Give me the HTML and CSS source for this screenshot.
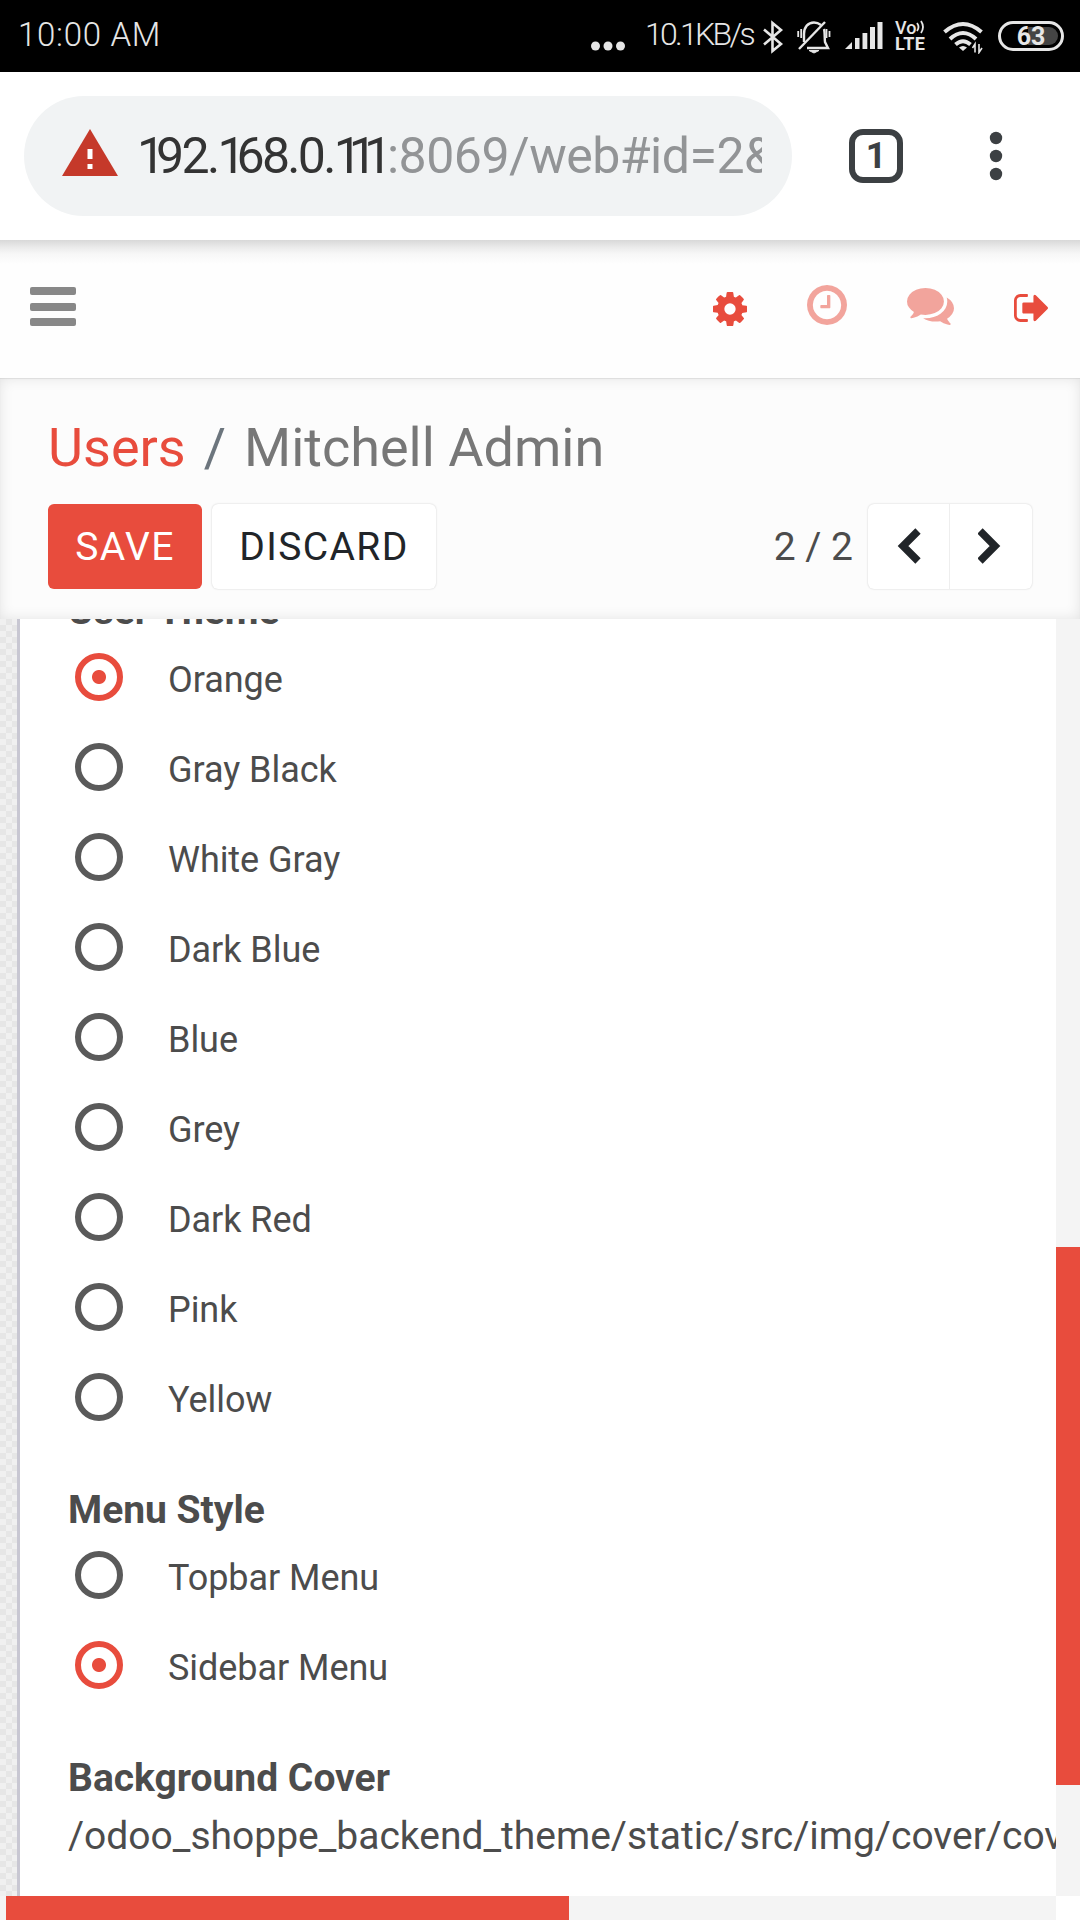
FILE: index.html
```html
<!DOCTYPE html>
<html lang="en">
<head>
<meta charset="utf-8">
<title>Mitchell Admin</title>
<link rel="stylesheet" href="styles.css">
</head>
<body>
<div class="status">
  <span class="time">10:00 AM</span>
  <svg class="more" width="34" height="10" viewBox="0 0 34 10" fill="#e6e6e6"><circle cx="4.500" cy="5" r="4.500"/><circle cx="17" cy="5" r="4.500"/><circle cx="29.500" cy="5" r="4.500"/></svg>
  <span class="speed">10.1KB/s</span>
  <svg class="bt" width="22" height="34" viewBox="0 0 22 34" fill="none" stroke="#e6e6e6" stroke-width="2.600"><path d="M2 9.500L19 24L10.500 31V3L19 10L2 24.500"/></svg>
  <svg class="bell" width="34" height="34" viewBox="0 0 34 34" fill="none" stroke="#e6e6e6" stroke-width="2.400"><path d="M7 22V14C7 7 11 2.500 17 2.500C20 2.500 22 3.500 24 5M27 9C28 12 27.500 19 28 22L31 28H10"/><path d="M2 29L28 2"/><path d="M12 30.500H22L17 33Z" fill="#e6e6e6" stroke-width="1"/><path d="M1.200 11v6M4.200 9v9M29.500 9v9M32.500 11v6" stroke-width="1.800"/></svg>
  <svg class="signal" width="39" height="29" viewBox="0 0 39 29" fill="#e6e6e6"><path d="M1 28L8 21V28Z"/><rect x="11" y="17" width="4.500" height="11"/><rect x="18.500" y="12" width="4.800" height="16"/><rect x="26" y="6" width="5" height="22"/><rect x="33.500" y="1" width="5" height="27"/></svg>
  <span class="volte"><span class="vo">Vo<svg width="9" height="14" viewBox="0 0 9 14" fill="none" stroke="#e6e6e6" stroke-width="1.800"><path d="M1 3Q4 7 1 11M5 1Q9 7 5 13"/></svg></span><span class="lte">LTE</span></span>
  <svg class="wifi" width="41" height="33" viewBox="0 0 41 33" fill="none" stroke="#e6e6e6" stroke-width="4"><path d="M1.500 11Q20 -5 38.500 11M7 18Q20 6 33 18M12.500 23.500Q20 17 27.500 23.500"/><path d="M16 26.500Q20 23.500 24 26.500L20 30Z" fill="#e6e6e6" stroke="none"/><path d="M32 31.500V23L29.500 27M36 23V31.500L39 27" stroke-width="1.600"/></svg>
  <span class="battery"><span class="level">63</span></span>
</div>

<div class="browser">
  <div class="pill">
    <svg width="56" height="48" viewBox="0 0 56 48"><path d="M28 0L56 47H0Z" fill="#c5392a"/><path d="M25.500 20h5v10h-5zM25.500 35h5v5h-5z" fill="#fff"/></svg>
    <div class="url"><span class="host"><span class="one">1</span>92.<span class="one">1</span>68.0.<span class="ones">111</span></span><span class="path">:8069/web#id=2&amp;</span></div>
  </div>
  <div class="tabs">1</div>
  <svg class="menu" width="14" height="50" viewBox="0 0 14 50" fill="#3c4043"><circle cx="7" cy="7" r="6.200"/><circle cx="7" cy="25" r="6.200"/><circle cx="7" cy="43" r="6.200"/></svg>
</div>

<header class="topbar">
  <div class="burger"><i></i><i></i><i></i></div>
  <svg class="cog" viewBox="128 128 1536 1536"><path d="M1152 896q0-106-75-181t-181-75-181 75-75 181 75 181 181 75 181-75 75-181zm512-109v222q0 12-8 23t-20 13l-185 28q-19 54-39 91 35 50 107 138 10 12 10 25t-9 23q-27 37-99 108t-94 71q-12 0-26-9l-138-108q-44 23-91 38-16 136-29 186-7 28-36 28h-222q-14 0-24.500-8.500t-11.500-21.500l-28-184q-49-16-90-37l-141 107q-10 9-25 9-14 0-25-11-126-114-165-168-7-10-7-23 0-12 8-23 15-21 51-66.500t54-70.500q-27-50-41-99l-183-27q-13-2-21-12.500t-8-23.500v-222q0-12 8-23t19-13l186-28q14-46 39-92-40-57-107-138-10-12-10-24 0-10 9-23 26-36 98.500-107.500t94.500-71.500q13 0 26 10l138 107q44-23 91-38 16-136 29-186 7-28 36-28h222q14 0 24.500 8.500t11.500 21.500l28 184q49 16 90 37l142-107q9-9 24-9 13 0 25 10 129 119 165 170 7 8 7 22 0 12-8 23-15 21-51 66.500t-54 70.500q26 50 41 98l183 28q13 2 21 12.500t8 23.500z"/></svg>
  <svg class="clock" viewBox="128 128 1536 1536"><path d="M1024 544v448q0 14-9 23t-23 9h-320q-14 0-23-9t-9-23v-64q0-14 9-23t23-9h224v-352q0-14 9-23t23-9h64q14 0 23 9t9 23zm416 352q0-148-73-273t-198-198-273-73-273 73-198 198-73 273 73 273 198 198 273 73 273-73 198-198 73-273zm224 0q0 209-103 385.500t-279.500 279.500-385.500 103-385.500-103-279.500-279.500-103-385.500 103-385.500 279.500-279.500 385.500-103 385.500 103 279.500 279.500 103 385.500z"/></svg>
  <svg class="chat" viewBox="0 256 1792 1408"><path d="M1408 768q0 139-94 257t-256.500 186.500-353.500 68.500q-86 0-176-16-124 88-278 128-36 9-86 16h-3q-11 0-20.500-8t-11.500-21q-1-3-1-6.500t.5-6.500 2-6l2.500-5 3.500-5.500 4-5 4.500-5 4-4.500q5-6 23-25t26-29.500 22.500-29 25-38.500 20.500-44q-124-72-195-177t-71-224q0-139 94-257t256.500-186.500 353.500-68.500 353.500 68.500 256.500 186.500 94 257zm384 256q0 120-71 224.500t-195 176.500q10 24 20.500 44t25 38.500 22.500 29 26 29.500 23 25q1 1 4 4.500t4.500 5 4 5 3.500 5.500l2.500 5 2 6 .5 6.500-1 6.500q-3 14-13 22t-22 7q-50-7-86-16-154-40-278-128-90 16-176 16-271 0-472-132 58 4 88 4 161 0 309-45t264-129q125-92 192-212t67-254q0-77-23-152 129 71 204 178t75 230z"/></svg>
  <svg class="out" viewBox="0 256 1568 1280"><path d="M640 1440q0 4 1 20t.5 26.500-3 23.500-10 19.500-20.500 6.500h-320q-119 0-203.500-84.500t-84.500-203.500v-704q0-119 84.500-203.500t203.500-84.500h320q13 0 22.500 9.500t9.500 22.500q0 4 1 20t.5 26.500-3 23.500-10 19.500-20.500 6.500h-320q-66 0-113 47t-47 113v704q0 66 47 113t113 47h312l11.500 1 11.500 3 8 5.500 7 9 2 13.500zm928-544q0 26-19 45l-544 544q-19 19-45 19t-45-19-19-45v-288h-448q-26 0-45-19t-19-45v-384q0-26 19-45t45-19h448v-288q0-26 19-45t45-19 45 19l544 544q19 19 19 45z"/></svg>
</header>

<section class="panel">
  <div class="crumbs"><a>Users</a><span class="sep">/</span><span>Mitchell Admin</span></div>
  <div class="actions">
    <button class="btn save">SAVE</button>
    <button class="btn discard">DISCARD</button>
    <span class="count">2 / 2</span>
    <div class="pager">
      <button><svg width="24" height="38" viewBox="0 0 24 38"><path d="M21 3L6 18L21 33"/></svg></button>
      <button><svg width="24" height="38" viewBox="0 0 24 38"><path d="M2 3L17 18L2 33"/></svg></button>
    </div>
  </div>
</section>

<main class="view">
  <div class="texture"></div>
  <div class="sheet">
    <h2>User Theme</h2>
    <ul>
      <li class="on"><i></i><span>Orange</span></li>
      <li><i></i><span>Gray Black</span></li>
      <li><i></i><span>White Gray</span></li>
      <li><i></i><span>Dark Blue</span></li>
      <li><i></i><span>Blue</span></li>
      <li><i></i><span>Grey</span></li>
      <li><i></i><span>Dark Red</span></li>
      <li><i></i><span>Pink</span></li>
      <li><i></i><span>Yellow</span></li>
    </ul>
    <h2>Menu Style</h2>
    <ul>
      <li><i></i><span>Topbar Menu</span></li>
      <li class="on"><i></i><span>Sidebar Menu</span></li>
    </ul>
    <h2>Background Cover</h2>
    <p>/odoo_shoppe_backend_theme/static/src/img/cover/cov</p>
  </div>
  <div class="vbar"><div class="vthumb"></div></div>
</main>
<div class="hbar"><div class="hthumb"></div></div>
</body>
</html>
```
FILE: styles.css
```css
* { box-sizing: border-box; }
body {
  margin: 0;
  width: 1080px;
  height: 1920px;
  overflow: hidden;
  display: flex;
  flex-direction: column;
  background: #fff;
  font-family: Roboto, "Liberation Sans", sans-serif;
  color: #4c4c4c;
}
svg { display: block; flex: none; }

/* Phone status bar */
.status {
  height: 72px;
  flex: none;
  background: #000;
  color: #e6e6e6;
  display: flex;
  align-items: flex-start;
  font-size: 33px;
  font-weight: 300;
  line-height: 39px;
  white-space: nowrap;
}
.time { width: 572px; padding: 15px 0 0 18px; letter-spacing: .7px; }
.more { margin: 41px 0 0 19px; }
.speed { width: 108px; margin: 15px 0 0 20px; font-size: 32px; letter-spacing: -2.7px; }
.bt { margin: 20px 0 0 9px; }
.bell { margin: 20px 0 0 13px; }
.signal { margin: 21px 0 0 13px; }
.volte {
  width: 34px;
  margin: 20px 0 0 12px;
  display: flex;
  flex-direction: column;
  font-size: 18px;
  font-weight: 500;
  line-height: 16px;
}
.vo { display: flex; }
.lte { font-weight: 700; letter-spacing: .4px; }
.wifi { margin: 21px 0 0 14px; }
.battery {
  width: 66px;
  height: 30px;
  margin: 21px 0 0 14px;
  padding: 3px;
  border: 3px solid #e6e6e6;
  border-radius: 15px;
}
.level {
  display: block;
  height: 18px;
  border-radius: 9px;
  background: linear-gradient(90deg, #000 45%, #444 45%);
  text-align: center;
  font-size: 25px;
  font-weight: 700;
  line-height: 19px;
}

/* Browser toolbar */
.browser { height: 168px; flex: none; display: flex; align-items: center; padding: 0 0 0 24px; }
.pill {
  width: 768px;
  height: 120px;
  padding-left: 38px;
  border-radius: 60px;
  background: #f1f3f4;
  display: flex;
  align-items: center;
}
.pill svg { margin-top: -6px; }
.url {
  width: 625px;
  margin-left: 19px;
  overflow: hidden;
  white-space: nowrap;
  font-size: 50px;
  line-height: 59px;
  color: #333;
}
.host { letter-spacing: -2.7px; }
.one { letter-spacing: -9px; }
.ones { letter-spacing: -13px; }
.path { color: #929496; margin-left: 8px; letter-spacing: -.5px; }
.tabs {
  width: 54px;
  height: 54px;
  margin-left: 57px;
  border: 6px solid #3c4043;
  border-radius: 14px;
  color: #3c4043;
  font-size: 36px;
  font-weight: 700;
  line-height: 43px;
  text-align: center;
}
.menu { margin-left: 86px; }

/* Application top bar */
.topbar {
  height: 138px;
  flex: none;
  display: flex;
  align-items: flex-start;
  padding-left: 30px;
  background: linear-gradient(#d8d8d8, #ececec 8px, #f7f7f7 14px, #fefefe 24px);
  fill: #e84c3d;
}
.burger { width: 46px; margin: 47px 637px 0 0; display: grid; gap: 7.500px; }
.burger i { height: 8px; border-radius: 2px; background: #888; }
.cog { width: 34px; height: 34px; margin-top: 52px; }
.clock { width: 40px; height: 40px; margin: 45px 0 0 60px; opacity: .5; }
.chat { width: 47px; height: 37px; margin: 48px 0 0 60px; opacity: .5; }
.out { width: 34px; height: 28px; margin: 54px 0 0 60px; }

/* Control panel */
.panel {
  height: 241px;
  flex: none;
  padding: 36px 48px 0;
  background: #fcfcfc;
  box-shadow: inset 0 0 14px rgba(0, 0, 0, .1), inset 0 1px 1px rgba(0, 0, 0, .08);
}
.crumbs { height: 90px; font-size: 54px; line-height: 68px; color: #777; white-space: nowrap; }
.crumbs a { color: #e84c3d; }
.crumbs .sep { margin: 0 18px; color: #6c757d; }
.actions { display: flex; align-items: center; }
button { font: inherit; border: 0; padding: 0; }
.btn {
  height: 85px;
  padding-top: 1px;
  border-radius: 6px;
  font-size: 39px;
  letter-spacing: 1.400px;
}
.save { width: 154px; background: #e84c3d; color: #fff; }
.discard { width: 224px; margin-left: 10px; background: #fff; color: #212529; box-shadow: 0 0 2px rgba(0, 0, 0, .2); }
.count { margin-left: auto; padding-top: 1px; font-size: 39px; }
.pager {
  display: flex;
  width: 164px;
  height: 85px;
  margin-left: 15px;
  border-radius: 6px;
  background: #fff;
  box-shadow: 0 0 2px rgba(0, 0, 0, .2);
}
.pager button { width: 81px; background: none; display: grid; place-items: center; }
.pager button + button { border-left: 1px solid #eee; }
.pager path { fill: none; stroke: #212529; stroke-width: 7.500; }

/* Form */
.view { height: 1277px; flex: none; display: flex; overflow: hidden; }
.texture {
  width: 17px;
  background: repeating-conic-gradient(#e6e6e6 0 25%, #f0f0f0 0 50%) 0 0 / 12px 12px;
}
.sheet {
  width: 1039px;
  height: 1306px;
  margin-top: -29px;
  padding-left: 48px;
  border-left: 3px solid #c8c7d2;
  overflow: hidden;
}
h2 { margin: 46px 0 0; padding-top: 1px; height: 42px; font-size: 39px; font-weight: 700; line-height: 42px; }
h2:first-child { margin-top: 0; padding-top: 0; }
ul { list-style: none; margin: 0; padding: 0; }
li { height: 90px; padding-left: 7px; display: flex; align-items: center; font-size: 36px; }
li i { width: 48px; height: 48px; border: 6px solid #5a5a5a; border-radius: 50%; }
li span { margin-left: 45px; padding-top: 5px; letter-spacing: -.05px; }
.on i { border-color: #e84c3d; background: radial-gradient(circle, #e84c3d 6.500px, transparent 7.500px); }
p { margin: 0; font-size: 39px; line-height: 76px; white-space: nowrap; }
.vbar { width: 24px; padding-top: 628px; background: #f4f4f4; }
.vthumb { height: 538px; background: #e84c3d; }
.hbar { width: 1056px; height: 24px; padding-left: 6px; background: #f4f4f4; }
.hthumb { width: 563px; height: 24px; background: #e84c3d; }
```
